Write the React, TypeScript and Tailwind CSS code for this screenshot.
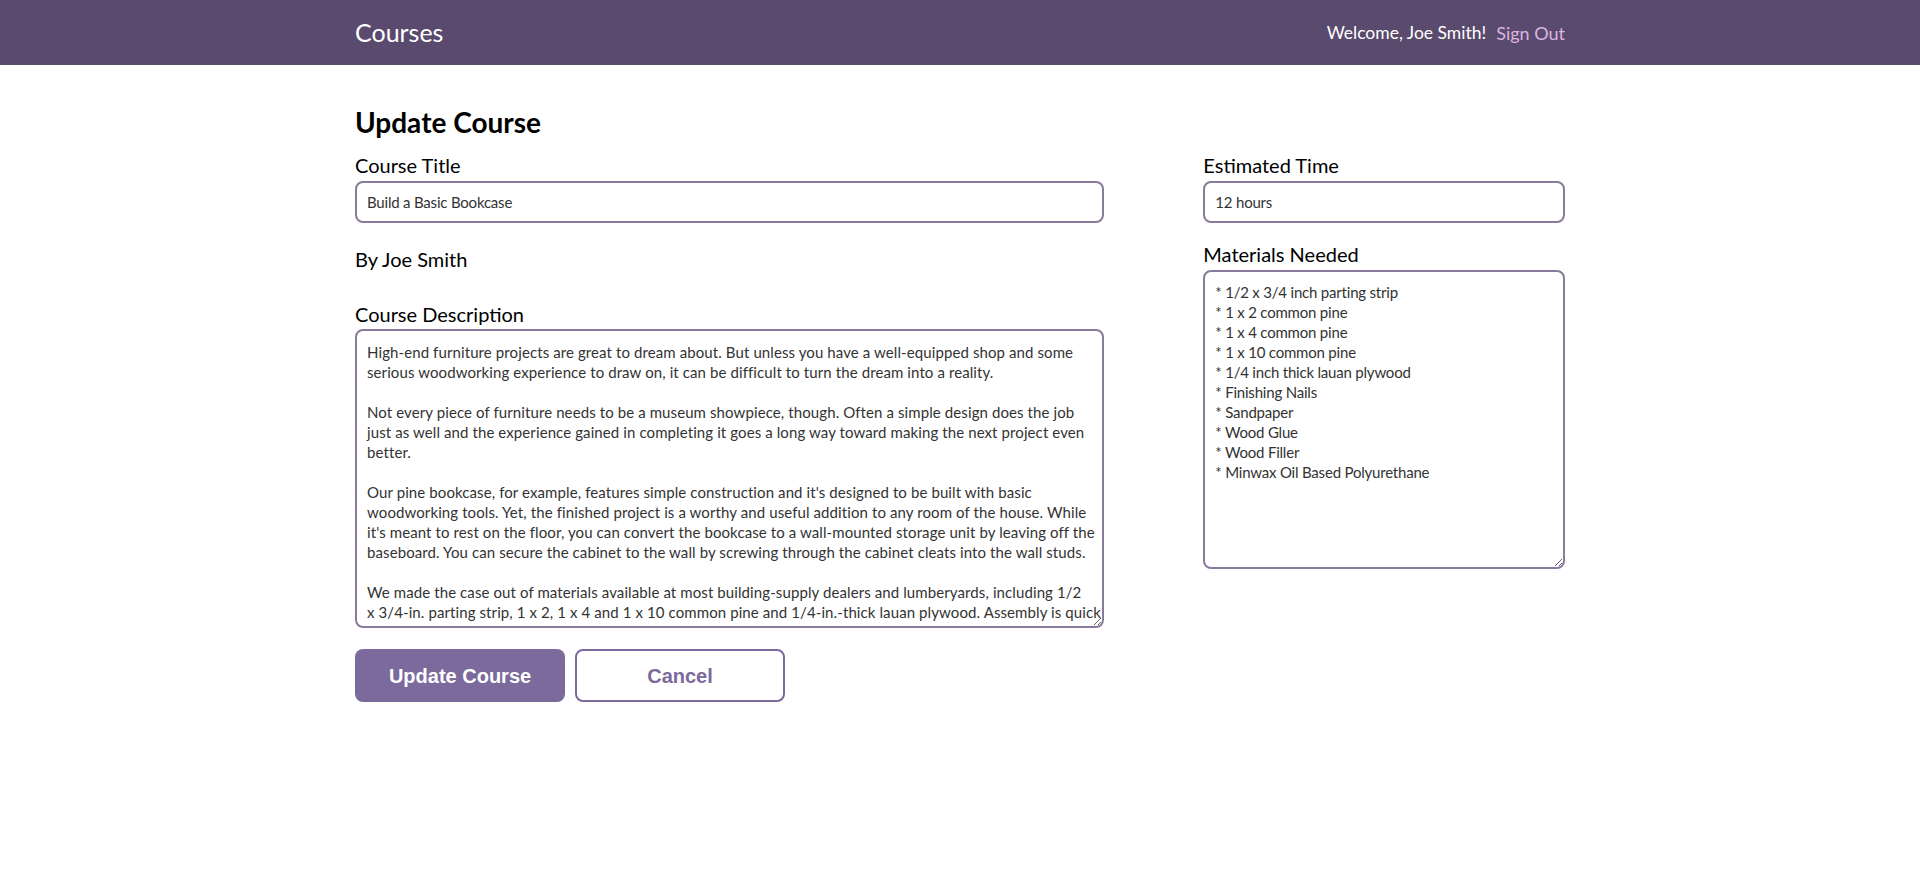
import React from "react";

const description = [
  "High-end furniture projects are great to dream about. But unless you have a well-equipped shop and some",
  "serious woodworking experience to draw on, it can be difficult to turn the dream into a reality.",
  "",
  "Not every piece of furniture needs to be a museum showpiece, though. Often a simple design does the job",
  "just as well and the experience gained in completing it goes a long way toward making the next project even",
  "better.",
  "",
  "Our pine bookcase, for example, features simple construction and it's designed to be built with basic",
  "woodworking tools. Yet, the finished project is a worthy and useful addition to any room of the house. While",
  "it's meant to rest on the floor, you can convert the bookcase to a wall-mounted storage unit by leaving off the",
  "baseboard. You can secure the cabinet to the wall by screwing through the cabinet cleats into the wall studs.",
  "",
  "We made the case out of materials available at most building-supply dealers and lumberyards, including 1/2",
  "x 3/4-in. parting strip, 1 x 2, 1 x 4 and 1 x 10 common pine and 1/4-in.-thick lauan plywood. Assembly is quick",
  "and easy with glue and nails, and when you're done with construction you have the option of a painted or clear",
  "finish.",
].join("\n");

const materials = [
  "* 1/2 x 3/4 inch parting strip",
  "* 1 x 2 common pine",
  "* 1 x 4 common pine",
  "* 1 x 10 common pine",
  "* 1/4 inch thick lauan plywood",
  "* Finishing Nails",
  "* Sandpaper",
  "* Wood Glue",
  "* Wood Filler",
  "* Minwax Oil Based Polyurethane",
].join("\n");

const field =
  "block w-full border-2 border-[#8a7a9e] rounded-[8px] bg-white text-[#333] text-[15px] font-['Lato',sans-serif] outline-none";

export default function App() {
  return (
    <div className="min-h-screen bg-white font-['Lato',sans-serif] text-black">
      {/* Header */}
      <header className="bg-[#594a6e] h-[65px]">
        <div className="w-[1210px] mx-auto h-full flex items-center justify-between">
          <h1 className="text-[25px] text-white leading-none">Courses</h1>
          <nav className="flex items-center gap-[10px] leading-none">
            <span className="text-white text-[17.5px]">Welcome, Joe Smith!</span>
            <a href="#" className="text-[#dcb5e0] text-[18px]">
              Sign Out
            </a>
          </nav>
        </div>
      </header>

      <main className="w-[1210px] mx-auto pt-[40px]">
        <h2 className="text-[28px] font-bold leading-[34px]">Update Course</h2>

        <form className="mt-[14px]">
          <div className="flex gap-[99px]">
            {/* Left column */}
            <div className="w-[750px]">
              <label className="block text-[20px] leading-[24px] mb-[4px]">Course Title</label>
              <input
                className={`${field} h-[42px] px-[10px] tracking-[-0.2px]`}
                defaultValue="Build a Basic Bookcase"
              />

              <p className="mt-[24px] text-[20px] leading-[24px]">By Joe Smith</p>

              <label className="block mt-[31px] text-[20px] leading-[24px] mb-[3px]">
                Course Description
              </label>
              <textarea
                wrap="off"
                className={`${field} h-[299px] px-[10px] pt-[11px] pb-[10px] leading-[20px] tracking-[0.1px] overflow-hidden`}
                defaultValue={description}
              />
            </div>

            {/* Right column */}
            <div className="w-[362px]">
              <label className="block text-[20px] leading-[24px] mb-[4px]">Estimated Time</label>
              <input
                className={`${field} h-[42px] px-[10px] tracking-[-0.2px]`}
                defaultValue="12 hours"
              />

              <label className="block mt-[19px] text-[20px] leading-[24px] mb-[4px]">
                Materials Needed
              </label>
              <textarea
                className={`${field} h-[299px] px-[10px] pt-[10px] pb-[10px] leading-[20px] tracking-[-0.2px] overflow-hidden`}
                defaultValue={materials}
              />
            </div>
          </div>

          <div className="mt-[21px] flex gap-[10px]">
            <button
              type="button"
              className="w-[210px] h-[53px] rounded-[8px] bg-[#7b6a9b] text-white text-[20px] font-bold font-['Liberation_Sans',Arial,sans-serif]"
            >
              Update Course
            </button>
            <button
              type="button"
              className="w-[210px] h-[53px] rounded-[8px] border-2 border-[#7b6a9b] bg-white text-[#7b6a9b] text-[20px] font-bold font-['Liberation_Sans',Arial,sans-serif]"
            >
              Cancel
            </button>
          </div>
        </form>
      </main>
    </div>
  );
}
